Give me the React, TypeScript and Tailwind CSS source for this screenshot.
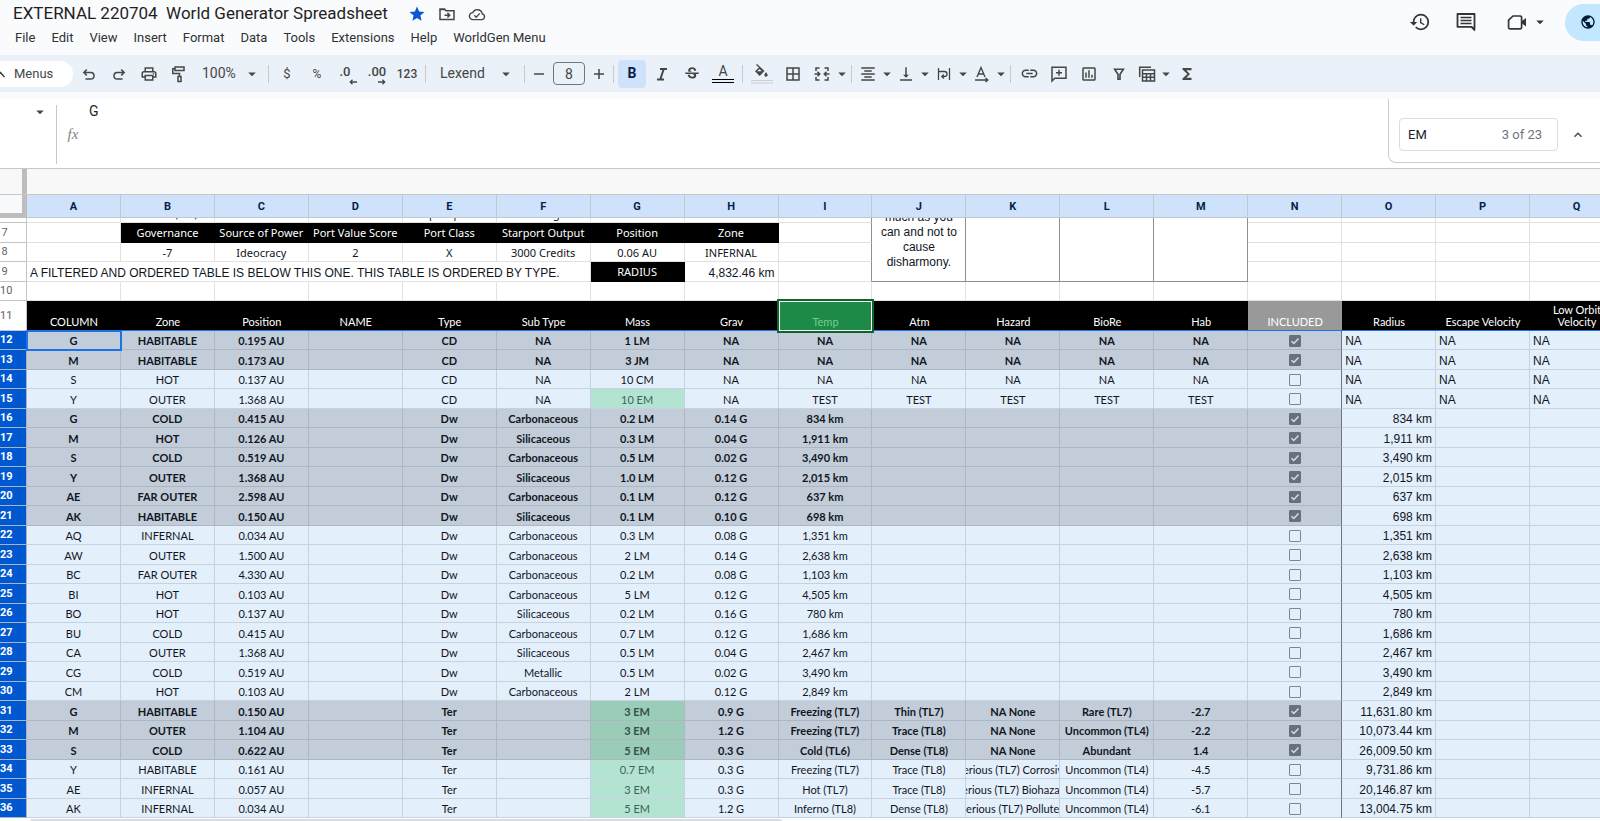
import type { ReactNode } from 'react';
import clsx from 'clsx';
import {
  MdArrowDropDown,
  MdBorderAll,
  MdFormatAlignCenter,
  MdFunctions,
  MdHistory,
  MdInsertLink,
  MdKeyboardArrowUp,
  MdOutlineInsertChart,
  MdOutlinePrint,
  MdPublic,
  MdStar,
  MdStrikethroughS,
  MdVerticalAlignBottom,
} from 'react-icons/md';

const COLUMNS = 'ABCDEFGHIJKLMNOPQ'.split('');

const MENUS = ['File', 'Edit', 'View', 'Insert', 'Format', 'Data', 'Tools', 'Extensions', 'Help', 'WorldGen Menu'];

type Row = { n: number; on: boolean; cells: string[]; radius: string; green?: boolean };

// column, zone, position, name, type, sub type, mass, grav, temp, atm, hazard, biore, hab
const ROWS: Row[] = [
  { n: 12, on: true, cells: ['G', 'HABITABLE', '0.195 AU', '', 'CD', 'NA', '1 LM', 'NA', 'NA', 'NA', 'NA', 'NA', 'NA'], radius: 'NA' },
  { n: 13, on: true, cells: ['M', 'HABITABLE', '0.173 AU', '', 'CD', 'NA', '3 JM', 'NA', 'NA', 'NA', 'NA', 'NA', 'NA'], radius: 'NA' },
  { n: 14, on: false, cells: ['S', 'HOT', '0.137 AU', '', 'CD', 'NA', '10 CM', 'NA', 'NA', 'NA', 'NA', 'NA', 'NA'], radius: 'NA' },
  { n: 15, on: false, cells: ['Y', 'OUTER', '1.368 AU', '', 'CD', 'NA', '10 EM', 'NA', 'TEST', 'TEST', 'TEST', 'TEST', 'TEST'], radius: 'NA', green: true },
  { n: 16, on: true, cells: ['G', 'COLD', '0.415 AU', '', 'Dw', 'Carbonaceous', '0.2 LM', '0.14 G', '834 km', '', '', '', ''], radius: '834 km' },
  { n: 17, on: true, cells: ['M', 'HOT', '0.126 AU', '', 'Dw', 'Silicaceous', '0.3 LM', '0.04 G', '1,911 km', '', '', '', ''], radius: '1,911 km' },
  { n: 18, on: true, cells: ['S', 'COLD', '0.519 AU', '', 'Dw', 'Carbonaceous', '0.5 LM', '0.02 G', '3,490 km', '', '', '', ''], radius: '3,490 km' },
  { n: 19, on: true, cells: ['Y', 'OUTER', '1.368 AU', '', 'Dw', 'Silicaceous', '1.0 LM', '0.12 G', '2,015 km', '', '', '', ''], radius: '2,015 km' },
  { n: 20, on: true, cells: ['AE', 'FAR OUTER', '2.598 AU', '', 'Dw', 'Carbonaceous', '0.1 LM', '0.12 G', '637 km', '', '', '', ''], radius: '637 km' },
  { n: 21, on: true, cells: ['AK', 'HABITABLE', '0.150 AU', '', 'Dw', 'Silicaceous', '0.1 LM', '0.10 G', '698 km', '', '', '', ''], radius: '698 km' },
  { n: 22, on: false, cells: ['AQ', 'INFERNAL', '0.034 AU', '', 'Dw', 'Carbonaceous', '0.3 LM', '0.08 G', '1,351 km', '', '', '', ''], radius: '1,351 km' },
  { n: 23, on: false, cells: ['AW', 'OUTER', '1.500 AU', '', 'Dw', 'Carbonaceous', '2 LM', '0.14 G', '2,638 km', '', '', '', ''], radius: '2,638 km' },
  { n: 24, on: false, cells: ['BC', 'FAR OUTER', '4.330 AU', '', 'Dw', 'Carbonaceous', '0.2 LM', '0.08 G', '1,103 km', '', '', '', ''], radius: '1,103 km' },
  { n: 25, on: false, cells: ['BI', 'HOT', '0.103 AU', '', 'Dw', 'Carbonaceous', '5 LM', '0.12 G', '4,505 km', '', '', '', ''], radius: '4,505 km' },
  { n: 26, on: false, cells: ['BO', 'HOT', '0.137 AU', '', 'Dw', 'Silicaceous', '0.2 LM', '0.16 G', '780 km', '', '', '', ''], radius: '780 km' },
  { n: 27, on: false, cells: ['BU', 'COLD', '0.415 AU', '', 'Dw', 'Carbonaceous', '0.7 LM', '0.12 G', '1,686 km', '', '', '', ''], radius: '1,686 km' },
  { n: 28, on: false, cells: ['CA', 'OUTER', '1.368 AU', '', 'Dw', 'Silicaceous', '0.5 LM', '0.04 G', '2,467 km', '', '', '', ''], radius: '2,467 km' },
  { n: 29, on: false, cells: ['CG', 'COLD', '0.519 AU', '', 'Dw', 'Metallic', '0.5 LM', '0.02 G', '3,490 km', '', '', '', ''], radius: '3,490 km' },
  { n: 30, on: false, cells: ['CM', 'HOT', '0.103 AU', '', 'Dw', 'Carbonaceous', '2 LM', '0.12 G', '2,849 km', '', '', '', ''], radius: '2,849 km' },
  { n: 31, on: true, cells: ['G', 'HABITABLE', '0.150 AU', '', 'Ter', '', '3 EM', '0.9 G', 'Freezing (TL7)', 'Thin (TL7)', 'NA None', 'Rare (TL7)', '-2.7'], radius: '11,631.80 km', green: true },
  { n: 32, on: true, cells: ['M', 'OUTER', '1.104 AU', '', 'Ter', '', '3 EM', '1.2 G', 'Freezing (TL7)', 'Trace (TL8)', 'NA None', 'Uncommon (TL4)', '-2.2'], radius: '10,073.44 km', green: true },
  { n: 33, on: true, cells: ['S', 'COLD', '0.622 AU', '', 'Ter', '', '5 EM', '0.3 G', 'Cold (TL6)', 'Dense (TL8)', 'NA None', 'Abundant', '1.4'], radius: '26,009.50 km', green: true },
  { n: 34, on: false, cells: ['Y', 'HABITABLE', '0.161 AU', '', 'Ter', '', '0.7 EM', '0.3 G', 'Freezing (TL7)', 'Trace (TL8)', 'Serious (TL7) Corrosive', 'Uncommon (TL4)', '-4.5'], radius: '9,731.86 km', green: true },
  { n: 35, on: false, cells: ['AE', 'INFERNAL', '0.057 AU', '', 'Ter', '', '3 EM', '0.3 G', 'Hot (TL7)', 'Trace (TL8)', 'Serious (TL7) Biohazard', 'Uncommon (TL4)', '-5.7'], radius: '20,146.87 km', green: true },
  { n: 36, on: false, cells: ['AK', 'INFERNAL', '0.034 AU', '', 'Ter', '', '5 EM', '1.2 G', 'Inferno (TL8)', 'Dense (TL8)', 'Serious (TL7) Polluted', 'Uncommon (TL4)', '-6.1'], radius: '13,004.75 km', green: true },
];

const HEADINGS = ['COLUMN', 'Zone', 'Position', 'NAME', 'Type', 'Sub Type', 'Mass', 'Grav', 'Temp', 'Atm', 'Hazard', 'BioRe', 'Hab', 'INCLUDED', 'Radius', 'Escape Velocity', 'Low Orbit Velocity'];

const line = 'border-r border-b border-[#e1e1e1]';
const arial = "font-['Liberation_Sans',sans-serif] text-[12px]";

function Caret() {
  return <MdArrowDropDown className="h-[18px] w-[18px] shrink-0" />;
}

function Tool({ label, wide, children }: { label: string; wide?: boolean; children: ReactNode }) {
  return (
    <button aria-label={label} className={clsx('flex h-7 shrink-0 items-center justify-center', wide ? 'w-8' : 'w-[30px]')}>
      {children}
    </button>
  );
}

function DropTool({ label, children }: { label: string; children: ReactNode }) {
  return (
    <button aria-label={label} className="flex h-7 w-[38px] shrink-0 items-center">
      <span className="flex w-[26px] justify-center">{children}</span>
      <span className="flex w-3 justify-center">
        <Caret />
      </span>
    </button>
  );
}

function Divider() {
  return <div className="mx-[3px] h-[18px] w-px shrink-0 bg-[#c7c9cc]" />;
}

function Glyph({ children }: { children: ReactNode }) {
  return (
    <svg viewBox="0 0 18 18" fill="none" stroke="currentColor" strokeWidth="1.5" className="h-[18px] w-[18px]">
      {children}
    </svg>
  );
}

function TitleBar() {
  return (
    <header className="flex h-[55px] items-start justify-between">
      <div>
        <div className="flex h-7 items-center pl-[13px]">
          <h1 className="text-[17px] whitespace-pre text-[#1f1f1f]">EXTERNAL 220704  World Generator Spreadsheet</h1>
          <div className="ml-5 flex items-center gap-3 text-[#444746]">
            <button aria-label="Star">
              <MdStar className="h-[18px] w-[18px] text-[#0b57d0]" />
            </button>
            <button aria-label="Move">
              <Glyph>
                <path d="M2 4.2h4.6l1.6 1.6H16v8.8H2z" />
                <path d="M6.5 10.2h4.8M9.4 7.9l2.3 2.3-2.3 2.3" />
                <path d="M1.5 3.5h5.3l1.5 1.8H1.5z" fill="currentColor" stroke="none" />
              </Glyph>
            </button>
            <button aria-label="Saved to Drive">
              <Glyph>
                <path d="M5 14.6h8.8a2.9 2.9 0 0 0 .5-5.7A5 5 0 0 0 4.8 7.6 3.5 3.5 0 0 0 5 14.6z" strokeWidth="1.4" />
                <path d="M6.3 10.3l1.9 1.9 3.6-3.8" strokeWidth="1.3" />
              </Glyph>
            </button>
          </div>
        </div>
        <nav className="flex gap-4 pl-[15px] text-[13px] leading-5 whitespace-nowrap text-[#303133]">
          {MENUS.map((menu) => (
            <button key={menu}>{menu}</button>
          ))}
        </nav>
      </div>

      <div className="flex h-11 items-center text-[#333536]">
        <button aria-label="Version history" className="mr-6">
          <MdHistory className="h-[22px] w-[22px]" />
        </button>
        <button aria-label="Comments" className="mr-[30px]">
          <svg viewBox="0 0 22 22" fill="none" stroke="currentColor" strokeWidth="1.8" className="h-[22px] w-[22px]">
            <path d="M2.500 3h17v15.500l-2.800-2.700H2.500z" strokeLinejoin="round" />
            <path d="M19.900 20.500l-4-4h4z" fill="currentColor" stroke="none" />
            <path d="M5.500 6.500h11M5.500 9.500h11M5.500 12.500h11" strokeWidth="1.600" />
          </svg>
        </button>
        <button aria-label="Join a call" className="mr-4 flex items-center gap-1">
          <svg viewBox="0 0 20 18" fill="none" stroke="currentColor" strokeWidth="1.7" className="h-[18px] w-5">
            <path d="M6 3h7.2a1.4 1.4 0 0 1 1.4 1.4v10A1.4 1.4 0 0 1 13.200 15.800H3a1.400 1.400 0 0 1-1.400-1.400V7.200z" />
            <path d="M15 8l4-3v8.400l-4-3z" fill="currentColor" stroke="none" />
          </svg>
          <Caret />
        </button>
        <button aria-label="Share" className="flex h-[37px] w-[35px] items-center justify-end rounded-l-full bg-[#c2e7ff] pr-1 text-[#001d35]">
          <MdPublic className="h-4 w-4" />
        </button>
      </div>
    </header>
  );
}

function Toolbar() {
  return (
    <div className="flex h-[37px] items-center bg-[#ebf1f9] text-[14px] text-[#444746]">
      <button className="mr-px flex h-[26px] w-[73px] shrink-0 items-center rounded-r-full bg-white">
        <svg viewBox="0 0 6 10" className="h-[10px] w-[6px]" stroke="currentColor" strokeWidth="1.6">
          <path d="M0 3l4.500 5" />
        </svg>
        <span className="ml-2 text-[13px]">Menus</span>
      </button>
      <Tool label="Undo">
        <Glyph>
          <path d="M6.800 4.500L3.800 7.500l3 3M4 7.500h6.700a3.300 3.300 0 0 1 0 6.600H5.500" />
        </Glyph>
      </Tool>
      <Tool label="Redo">
        <Glyph>
          <path d="M11.200 4.500l3 3-3 3M14 7.500H7.300a3.300 3.300 0 0 0 0 6.600h5.200" />
        </Glyph>
      </Tool>
      <Tool label="Print">
        <MdOutlinePrint className="h-[18px] w-[18px]" />
      </Tool>
      <Tool label="Paint format">
        <Glyph>
          <path d="M5 2h9v3.500H5zM5 3.700H2.800v4.800h6.700v3" />
          <path d="M8 11.500h3v5H8z" />
        </Glyph>
      </Tool>
      <label className="relative flex w-[71px] shrink-0 items-center">
        <select aria-label="Zoom" className="w-full appearance-none bg-transparent pl-2">
          <option>100%</option>
        </select>
        <span className="pointer-events-none absolute right-1">
          <Caret />
        </span>
      </label>
      <Divider />
      <Tool label="Format as currency">
        <span className="text-[13px]">$</span>
      </Tool>
      <Tool label="Format as percent">
        <span className="text-[12px]">%</span>
      </Tool>
      <Tool label="Decrease decimal places">
        <span className="relative mr-1 pb-1 text-[13px] font-medium">
          .0
          <svg viewBox="0 0 8 6" fill="none" stroke="currentColor" strokeWidth="1.300" className="absolute right-[-6px] bottom-0 h-[6px] w-2">
            <path d="M8 3H1.500M3.500 .8L1.300 3l2.200 2.200" />
          </svg>
        </span>
      </Tool>
      <Tool label="Increase decimal places">
        <span className="relative pb-1 text-[13px] font-medium">
          .00
          <svg viewBox="0 0 8 6" fill="none" stroke="currentColor" strokeWidth="1.300" className="absolute right-0 bottom-0 h-[6px] w-2">
            <path d="M0 3h6.500M4.500 .8L6.700 3 4.500 5.200" />
          </svg>
        </span>
      </Tool>
      <Tool label="More formats">
        <span className="text-[12px] font-medium">123</span>
      </Tool>
      <Divider />
      <label className="relative flex w-[92px] shrink-0 items-center">
        <select aria-label="Font" className="w-full appearance-none bg-transparent pl-[11px]">
          <option>Lexend</option>
        </select>
        <span className="pointer-events-none absolute right-[6px]">
          <Caret />
        </span>
      </label>
      <Divider />
      <button aria-label="Decrease font size" className="flex w-[22px] shrink-0 justify-center">
        <Glyph>
          <path d="M4 9h10" />
        </Glyph>
      </button>
      <input aria-label="Font size" defaultValue="8" className="mx-[3px] h-[23px] w-8 shrink-0 rounded border border-[#747775] bg-transparent text-center" />
      <button aria-label="Increase font size" className="flex w-[22px] shrink-0 justify-center">
        <Glyph>
          <path d="M4 9h10M9 4v10" />
        </Glyph>
      </button>
      <Divider />
      <Tool label="Bold">
        <span className="flex h-7 w-7 items-center justify-center rounded bg-[#cfe2fc] font-bold text-[#041e49]">B</span>
      </Tool>
      <Tool label="Italic">
        <Glyph>
          <path d="M7 4h7M4 14.500h7M10.700 4L7.300 14.500" strokeWidth="2" />
        </Glyph>
      </Tool>
      <Tool label="Strikethrough">
        <MdStrikethroughS className="h-[18px] w-[18px]" />
      </Tool>
      <Tool label="Text color" wide>
        <span className="mb-px flex w-[22px] justify-center border-b-4 border-double border-black leading-4">A</span>
      </Tool>
      <Divider />
      <Tool label="Fill color" wide>
        <svg viewBox="0 0 22 20" className="h-5 w-[22px]" fill="currentColor">
          <path d="M6 0l7.500 7-4.800 5L4 7.300l4-3.800L5 1z" />
          <path d="M6 7.200h4.800L8.500 4.900z" fill="#ebf1f9" />
          <path d="M15 8.200s1.700 1.900 1.700 2.900a1.700 1.700 0 0 1-3.400 0c0-1 1.700-2.900 1.700-2.900z" />
          <path d="M0 16h22v1H0zM0 18.500h22v1H0z" fill="#ccd0d4" />
        </svg>
      </Tool>
      <Tool label="Borders">
        <MdBorderAll className="h-[18px] w-[18px]" />
      </Tool>
      <button aria-label="Merge cells" className="flex h-7 w-10 shrink-0 items-center">
        <span className="flex w-7 justify-center">
          <Glyph>
            <path d="M6.500 3H3v3M11.500 3H15v3M6.500 15H3v-3M11.500 15H15v-3M1.500 9h5M4.500 6.800L6.700 9l-2.200 2.200M16.500 9h-5M13.500 6.800L11.300 9l2.200 2.200" />
          </Glyph>
        </span>
        <span className="flex w-3 justify-center">
          <Caret />
        </span>
      </button>
      <Divider />
      <DropTool label="Horizontal align">
        <MdFormatAlignCenter className="h-[18px] w-[18px]" />
      </DropTool>
      <DropTool label="Vertical align">
        <MdVerticalAlignBottom className="h-[18px] w-[18px]" />
      </DropTool>
      <DropTool label="Text wrapping">
        <Glyph>
          <path d="M3.500 3v12M14.500 3v12M3.500 6.500h6a2.500 2.500 0 0 1 0 5H7M8.800 9.500l-2 2 2 2" strokeWidth="1.300" />
        </Glyph>
      </DropTool>
      <DropTool label="Text rotation">
        <Glyph>
          <path d="M4 12L8 2.500 12 12M5.500 9h5M2 15h12.500M12.500 13l2.300 2-2.300 2" strokeWidth="1.400" />
        </Glyph>
      </DropTool>
      <Divider />
      <Tool label="Insert link">
        <MdInsertLink className="h-[19px] w-[19px]" />
      </Tool>
      <Tool label="Insert comment">
        <Glyph>
          <path d="M2 2.200h14v11H4.800L2 16z" />
          <path d="M9 4.700v6M6 7.700h6" />
        </Glyph>
      </Tool>
      <Tool label="Insert chart">
        <MdOutlineInsertChart className="h-[18px] w-[18px]" />
      </Tool>
      <Tool label="Create a filter">
        <Glyph>
          <path d="M4.600 4.200h8.800L10 9.200v5H8v-5z" strokeWidth="1.600" />
        </Glyph>
      </Tool>
      <DropTool label="Table views">
        <Glyph>
          <path d="M1.700 12V2.200H13" />
          <path d="M4.500 5h12v11h-12zM4.500 8.700h12M4.500 12.300h12M8.500 8.700V16M12.500 8.700V16" />
        </Glyph>
      </DropTool>
      <Tool label="Functions">
        <MdFunctions className="h-[18px] w-[18px]" />
      </Tool>
    </div>
  );
}

function FormulaBar() {
  return (
    <div className="relative flex h-[70px] border-b border-[#c7c7c7] bg-white">
      <button aria-label="Name box" className="flex h-[26px] w-[56px] justify-end pr-[7px] text-[#444746]">
        <span className="flex items-center">
          <Caret />
        </span>
      </button>
      <div className="mt-[6px] h-[59px] w-px bg-[#c7c7c7]" />
      <span className="w-8 pt-6 text-center font-['Liberation_Serif',serif] text-[15px] text-[#80868b] italic">fx</span>
      <input aria-label="Formula" defaultValue="G" className="h-6 w-[400px] bg-transparent text-[14px] text-[#1f1f1f]" />

      <div className="absolute top-0 right-0 flex h-16 w-[212px] items-center rounded-bl-lg border-b border-l border-[#c9ccd1] bg-white pt-2 pl-[10px]">
        <label className="flex h-[33px] w-[159px] items-center justify-between rounded border border-[#dadce0] pr-[15px] pl-2">
          <input aria-label="Find in sheet" defaultValue="EM" className="w-20 text-[13px] text-[#202124]" />
          <span className="text-[13px] whitespace-nowrap text-[#70757a]">3 of 23</span>
        </label>
        <button aria-label="Previous" className="ml-3 text-[#444746]">
          <MdKeyboardArrowUp className="h-4 w-4" />
        </button>
      </div>
    </div>
  );
}

function RowNumber({ n, selected }: { n?: number; selected?: boolean }) {
  return (
    <th
      scope="row"
      className={clsx(
        "border-r border-b p-0 pr-[17px] font-['Roboto',sans-serif] text-[11px] leading-4",
        selected ? 'border-[#a9b4c8] bg-[#0058d0] font-bold text-white' : 'border-[#c4c4c4] bg-white font-normal text-[#5f6368]',
      )}
    >
      {n}
    </th>
  );
}

function Blanks({ count }: { count: number }) {
  return (
    <>
      {Array.from({ length: count }, (_, i) => (
        <td key={i} className={clsx(line, 'bg-white')} />
      ))}
    </>
  );
}

function Peek({ text }: { text?: string }) {
  return (
    <td className={clsx(line, 'p-0')}>
      <div className="flex h-1 items-end justify-center overflow-hidden leading-4">{text}</div>
    </td>
  );
}

function CheckCell({ on, label }: { on: boolean; label: string }) {
  return (
    <div className="grid place-items-center pt-px">
      <input
        type="checkbox"
        aria-label={label}
        defaultChecked={on}
        className="h-3 w-3 appearance-none rounded-[1px] border border-[#7c8791] checked:border-[#66717d] checked:bg-[#66717d] [grid-area:1/1]"
      />
      {on && (
        <svg viewBox="0 0 12 12" fill="none" stroke="#d5dde7" strokeWidth="1.500" className="pointer-events-none h-3 w-3 [grid-area:1/1]">
          <path d="M2.500 6.200l2.300 2.300 4.700-5" />
        </svg>
      )}
    </div>
  );
}

function DataRow({ row }: { row: Row }) {
  const empty = row.radius === 'NA';
  const cell = clsx('border-r border-b p-0', row.on ? 'border-[#adb7c4] bg-[#c3cdda]' : 'border-[#c6d2df] bg-[#e4effc]');
  const plain = clsx('border-r border-b border-[#c6d2df] bg-[#e4effc] px-[3px] pt-[2px] pb-0 leading-4', arial, empty ? 'text-left' : 'text-right');

  return (
    <tr className={row.n % 2 ? 'h-5' : 'h-[19px]'}>
      <RowNumber n={row.n} selected />
      {row.cells.map((text, i) => (
        <td
          key={i}
          className={clsx(
            cell,
            row.on && 'font-bold',
            row.n === 12 && i === 0 && 'outline-2 -outline-offset-1 outline-[#1a73e8]',
            i === 6 && row.green && (row.on ? '!bg-[#9accb8] text-[#33524a]' : '!bg-[#b3e4d1] text-[#3f6258]'),
          )}
        >
          <div className="flex justify-center overflow-hidden pt-[2px] leading-4 whitespace-nowrap">{text}</div>
        </td>
      ))}
      <td className={clsx(cell, '!border-r-[#6c757f]')}>
        <CheckCell on={row.on} label={`Include row ${row.n}`} />
      </td>
      <td className={plain}>{row.radius}</td>
      <td className={plain}>{empty && 'NA'}</td>
      <td className={plain}>{empty && 'NA'}</td>
    </tr>
  );
}

function Sheet() {
  const noto = "bg-white font-['Noto_Sans',sans-serif] text-[11px]";
  const black = 'border-r border-b border-black bg-black p-0 text-center text-white';
  const value = clsx(line, 'px-0 pt-[2px] pb-0 text-center leading-4');

  return (
    <div className="overflow-hidden">
      <div className="flex h-[26px] border-b border-[#c7c7c7] bg-[#f8f8f8]">
        <div className="w-[27px] border-r-[5px] border-[#bdbdbd]" />
      </div>
      <table className="w-[calc(100%+24px)] table-fixed border-separate border-spacing-0 font-['Lato',sans-serif] text-[11px] text-[#10161d]">
        <colgroup>
          <col className="w-[27px]" />
          {COLUMNS.map((c) => (
            <col key={c} />
          ))}
        </colgroup>
        <thead className="font-['Roboto',sans-serif]">
          <tr className="h-[23px]">
            <th className="border-r-[5px] border-b-[5px] border-[#bdbdbd] bg-[#f8f9fa] p-0" />
            {COLUMNS.map((c) => (
              <th key={c} scope="col" className="border-r border-b border-[#c4c7cb] bg-[#cfe2fc] px-0 pt-[2px] pb-0 leading-4 font-bold text-[#041e49]">
                {c}
              </th>
            ))}
          </tr>
        </thead>
        <tbody>
          <tr className={clsx('h-[5px]', noto)}>
            <th className="border-r border-b border-[#c4c4c4] bg-white p-0" />
            <Peek />
            <Peek text="Radius (km)" />
            <Peek />
            <Peek />
            <Peek text="Spaceport" />
            <Peek text="Rating" />
            <Peek />
            <Peek />
            <td className="border-r border-b border-r-[#8e8e8e] border-b-[#e1e1e1] p-0" />
            <td rowSpan={4} className="border-r border-b border-[#8e8e8e] bg-white p-0">
              <div className={clsx('flex h-[63px] flex-col justify-end overflow-hidden pb-[11px] text-center leading-[15px]', arial)}>
                <p className="px-1">much as you can and not to cause disharmony.</p>
              </div>
            </td>
            <td rowSpan={4} className="border-r border-b border-[#8e8e8e] bg-white" />
            <td rowSpan={4} className="border-r border-b border-[#8e8e8e] bg-white" />
            <td rowSpan={4} className="border-r border-b border-[#8e8e8e] bg-white" />
            <Peek />
            <Peek />
            <Peek />
            <Peek />
          </tr>
          <tr className={clsx('h-5', noto)}>
            <RowNumber n={7} />
            <Blanks count={1} />
            {['Governance', 'Source of Power', 'Port Value Score', 'Port Class', 'Starport Output', 'Position', 'Zone'].map((h) => (
              <td key={h} className={clsx(black, 'leading-4 whitespace-nowrap')}>
                {h}
              </td>
            ))}
            <td className="border-r border-b border-r-[#8e8e8e] border-b-[#e1e1e1]" />
            <Blanks count={4} />
          </tr>
          <tr className={clsx('h-[19px]', noto)}>
            <RowNumber n={8} />
            <Blanks count={1} />
            {['-7', 'Ideocracy', '2', 'X', '3000 Credits', '0.06 AU', 'INFERNAL'].map((v) => (
              <td key={v} className={value}>
                {v}
              </td>
            ))}
            <td className="border-r border-b border-r-[#8e8e8e] border-b-[#e1e1e1]" />
            <Blanks count={4} />
          </tr>
          <tr className={clsx('h-5', noto)}>
            <RowNumber n={9} />
            <td colSpan={6} className={clsx(line, arial, 'px-[3px] pt-[2px] pb-0 leading-4 whitespace-nowrap')}>
              A FILTERED AND ORDERED TABLE IS BELOW THIS ONE. THIS TABLE IS ORDERED BY TYPE.
            </td>
            <td className={clsx(black, 'leading-4')}>RADIUS</td>
            <td className={clsx(line, arial, 'px-[3px] pt-[2px] pb-0 text-right leading-4')}>4,832.46 km</td>
            <td className="border-r border-b border-r-[#8e8e8e] border-b-[#e1e1e1]" />
            <Blanks count={4} />
          </tr>
          <tr className="h-[19px]">
            <RowNumber n={10} />
            <Blanks count={17} />
          </tr>
          <tr className="h-[30px]">
            <RowNumber n={11} />
            {HEADINGS.map((h) => (
              <td
                key={h}
                className={clsx(
                  'border-b px-2 pt-0 pb-[2px] text-center align-bottom leading-3',
                  h === 'Temp'
                    ? 'border-white bg-[#1e8a47] text-[#74cf97] shadow-[inset_1px_1px_0_#ffffff,inset_-1px_0_0_#ffffff] outline-2 outline-[#0d652d]'
                    : 'border-[#1a73e8] text-white',
                  h === 'INCLUDED' && 'bg-[#999999]',
                  h !== 'Temp' && h !== 'INCLUDED' && 'bg-black',
                )}
              >
                {h}
              </td>
            ))}
          </tr>
          {ROWS.map((row) => (
            <DataRow key={row.n} row={row} />
          ))}
        </tbody>
      </table>
      <div className="h-[3px] overflow-hidden bg-white pt-px pl-[29px]">
        <div className="h-2 w-[48%] rounded-full bg-[#dadce0]" />
      </div>
    </div>
  );
}

export default function App() {
  return (
    <div className="overflow-hidden bg-[#f9fbfd] font-['Roboto',sans-serif]">
      <TitleBar />
      <Toolbar />
      <div className="pt-[7px]">
        <FormulaBar />
      </div>
      <Sheet />
    </div>
  );
}
